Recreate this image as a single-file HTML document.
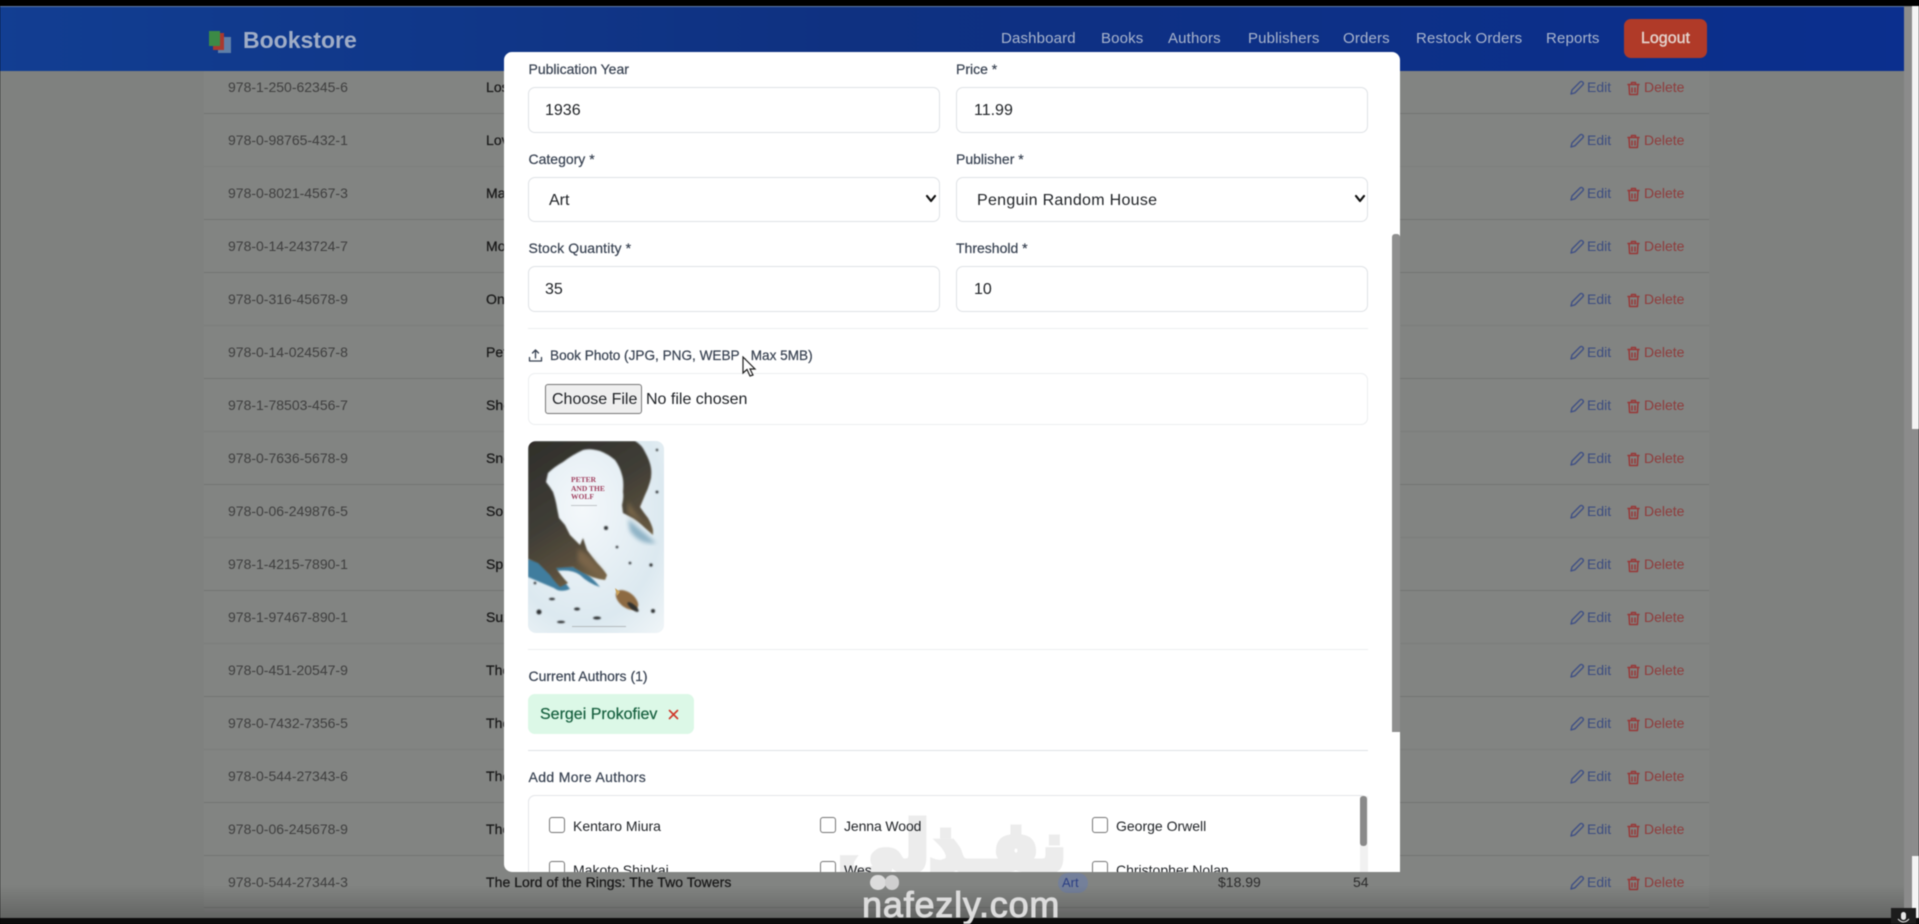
<!DOCTYPE html>
<html lang="en"><head><meta charset="utf-8"><title>Bookstore</title>
<style>
html,body{margin:0;padding:0;width:1919px;height:924px;overflow:hidden;background:#000}
#p{position:relative;width:1919px;height:924px;overflow:hidden;font-family:"Liberation Sans",sans-serif;filter:blur(.45px);background:#7f817f}
#p div,#p span,#p svg{position:absolute;white-space:nowrap}
.isbn{left:228px;font-size:14px;line-height:16px;color:#3f3f3f}
.t{left:486px;font-size:14px;line-height:16px;color:#181818;-webkit-text-stroke:.25px #181818;letter-spacing:.05px}
.ln{left:204px;width:1505px;height:1px;background:#737573}
.e{left:1587px;font-size:14px;line-height:16px;color:#3c4d80}
.d{left:1644px;font-size:14px;line-height:16px;color:#8f3c3c}
.nav{top:30px;font-size:15px;line-height:18px;color:#aab5cd;letter-spacing:.15px}
.lb{font-size:14px;line-height:16px;color:#374151;-webkit-text-stroke:.2px #374151}
.in{border:1.5px solid #dfe2e6;border-radius:7px;background:#fff;box-sizing:border-box}
.v{font-size:16px;line-height:18px;color:#1f2226}
.hr{height:1px;background:#eceef0}
.cb{width:16px;height:16px;border:1.5px solid #767676;border-radius:3px;box-sizing:border-box;background:#fff}
.n{font-size:14px;line-height:16px;color:#1f2226}
</style></head><body><div id="p">

<!-- table -->
<div style="left:204px;top:71px;width:1505px;height:840px;background:#828482"></div>
<div style="left:1904px;top:7px;width:8px;height:911px;background:#8b8b8b"></div>
<div style="left:1912px;top:5px;width:7px;height:424px;background:#f4f4f4"></div>
<div style="left:1912px;top:429px;width:7px;height:427px;background:#8c8c8c"></div>
<div style="left:1912px;top:856px;width:7px;height:62px;background:#f4f4f4"></div>

<div class="isbn" style="top:79px">978-1-250-62345-6</div><div class="t" style="top:79px">Lost Horizon</div><div class="ln" style="top:113px"></div>
<div class="isbn" style="top:132px">978-0-98765-432-1</div><div class="t" style="top:132px">Love Story</div><div class="ln" style="top:166px;opacity:.3"></div>
<div class="isbn" style="top:185px">978-0-8021-4567-3</div><div class="t" style="top:185px">Master</div><div class="ln" style="top:219px"></div>
<div class="isbn" style="top:238px">978-0-14-243724-7</div><div class="t" style="top:238px">Moby Dick</div><div class="ln" style="top:272px"></div>
<div class="isbn" style="top:291px">978-0-316-45678-9</div><div class="t" style="top:291px">One Day</div><div class="ln" style="top:325px;opacity:.4"></div>
<div class="isbn" style="top:344px">978-0-14-024567-8</div><div class="t" style="top:344px">Peter</div><div class="ln" style="top:378px"></div>
<div class="isbn" style="top:397px">978-1-78503-456-7</div><div class="t" style="top:397px">Shogun</div><div class="ln" style="top:431px;opacity:.4"></div>
<div class="isbn" style="top:450px">978-0-7636-5678-9</div><div class="t" style="top:450px">Snow</div><div class="ln" style="top:484px"></div>
<div class="isbn" style="top:503px">978-0-06-249876-5</div><div class="t" style="top:503px">Song</div><div class="ln" style="top:537px;opacity:.4"></div>
<div class="isbn" style="top:556px">978-1-4215-7890-1</div><div class="t" style="top:556px">Spirit</div><div class="ln" style="top:590px"></div>
<div class="isbn" style="top:609px">978-1-97467-890-1</div><div class="t" style="top:609px">Suzume</div><div class="ln" style="top:643px;opacity:.4"></div>
<div class="isbn" style="top:662px">978-0-451-20547-9</div><div class="t" style="top:662px">The</div><div class="ln" style="top:696px"></div>
<div class="isbn" style="top:715px">978-0-7432-7356-5</div><div class="t" style="top:715px">The</div><div class="ln" style="top:749px;opacity:.4"></div>
<div class="isbn" style="top:768px">978-0-544-27343-6</div><div class="t" style="top:768px">The</div><div class="ln" style="top:802px"></div>
<div class="isbn" style="top:821px">978-0-06-245678-9</div><div class="t" style="top:821px">The</div><div class="ln" style="top:855px"></div>
<div class="isbn" style="top:874px">978-0-544-27344-3</div><div class="t" style="top:874px">The Lord of the Rings: The Two Towers</div><div class="ln" style="top:907px"></div>

<div style="left:1058px;top:873px;width:30px;height:20px;border-radius:10px;background:#74809a"></div>
<div style="left:1062px;top:874px;font-size:13px;line-height:18px;color:#2b3f85">Art</div>
<div style="left:1218px;top:874px;font-size:14px;line-height:16px;color:#2c2c2c">$18.99</div>
<div style="left:1353px;top:874px;font-size:14px;line-height:16px;color:#2c2c2c">54</div>

<!-- action icons rows -->
<svg style="left:0;top:0" width="1919" height="924" fill="none" stroke-linecap="round" stroke-linejoin="round">
<defs>
<g id="pen"><path d="M2 14 L3 10 L11 2 Q12.500 .8 13.800 2.200 Q15 3.500 13.800 4.800 L6 12.800 Z" stroke="#3f5085" stroke-width="1.400"/></g>
<g id="tr"><path d="M1 3.500H12M4.500 3.500V1.500H8.500V3.500M2 3.500L2.600 13.500H10.400L11 3.500M5 7V11M8 7V11" stroke="#983838" stroke-width="1.500"/></g>
</defs>
<use href="#pen" x="1569" y="80"/><use href="#tr" x="1627" y="81"/>
<use href="#pen" x="1569" y="133"/><use href="#tr" x="1627" y="134"/>
<use href="#pen" x="1569" y="186"/><use href="#tr" x="1627" y="187"/>
<use href="#pen" x="1569" y="239"/><use href="#tr" x="1627" y="240"/>
<use href="#pen" x="1569" y="292"/><use href="#tr" x="1627" y="293"/>
<use href="#pen" x="1569" y="345"/><use href="#tr" x="1627" y="346"/>
<use href="#pen" x="1569" y="398"/><use href="#tr" x="1627" y="399"/>
<use href="#pen" x="1569" y="451"/><use href="#tr" x="1627" y="452"/>
<use href="#pen" x="1569" y="504"/><use href="#tr" x="1627" y="505"/>
<use href="#pen" x="1569" y="557"/><use href="#tr" x="1627" y="558"/>
<use href="#pen" x="1569" y="610"/><use href="#tr" x="1627" y="611"/>
<use href="#pen" x="1569" y="663"/><use href="#tr" x="1627" y="664"/>
<use href="#pen" x="1569" y="716"/><use href="#tr" x="1627" y="717"/>
<use href="#pen" x="1569" y="769"/><use href="#tr" x="1627" y="770"/>
<use href="#pen" x="1569" y="822"/><use href="#tr" x="1627" y="823"/>
<use href="#pen" x="1569" y="875"/><use href="#tr" x="1627" y="876"/>
</svg>
<div class="e" style="top:79px">Edit</div><div class="d" style="top:79px">Delete</div>
<div class="e" style="top:132px">Edit</div><div class="d" style="top:132px">Delete</div>
<div class="e" style="top:185px">Edit</div><div class="d" style="top:185px">Delete</div>
<div class="e" style="top:238px">Edit</div><div class="d" style="top:238px">Delete</div>
<div class="e" style="top:291px">Edit</div><div class="d" style="top:291px">Delete</div>
<div class="e" style="top:344px">Edit</div><div class="d" style="top:344px">Delete</div>
<div class="e" style="top:397px">Edit</div><div class="d" style="top:397px">Delete</div>
<div class="e" style="top:450px">Edit</div><div class="d" style="top:450px">Delete</div>
<div class="e" style="top:503px">Edit</div><div class="d" style="top:503px">Delete</div>
<div class="e" style="top:556px">Edit</div><div class="d" style="top:556px">Delete</div>
<div class="e" style="top:609px">Edit</div><div class="d" style="top:609px">Delete</div>
<div class="e" style="top:662px">Edit</div><div class="d" style="top:662px">Delete</div>
<div class="e" style="top:715px">Edit</div><div class="d" style="top:715px">Delete</div>
<div class="e" style="top:768px">Edit</div><div class="d" style="top:768px">Delete</div>
<div class="e" style="top:821px">Edit</div><div class="d" style="top:821px">Delete</div>
<div class="e" style="top:874px">Edit</div><div class="d" style="top:874px">Delete</div>

<!-- bottom shading -->
<div style="left:0;top:885px;width:1904px;height:33px;background:linear-gradient(180deg,rgba(0,0,0,0),rgba(0,0,0,.22))"></div>

<!-- header -->
<div style="left:0;top:7px;width:1904px;height:64px;background:linear-gradient(90deg,#123e92,#0f3181 45%,#0b2f8e)"></div>
<div style="left:0;top:0;width:1919px;height:6px;background:#000"></div>
<div style="left:0;top:6px;width:1904px;height:1px;background:#5f7ba8"></div>
<svg style="left:207px;top:29px" width="28" height="25" viewBox="0 0 28 25">
<rect x="11" y="8" width="13" height="16" fill="#5f7fa8"/><rect x="6" y="4" width="11" height="17" fill="#a8392f"/><rect x="2" y="2" width="11" height="15" fill="#3c8a46"/></svg>
<div style="left:243px;top:27px;font-size:23px;line-height:27px;font-weight:700;color:#a0adc6">Bookstore</div>
<div class="nav" style="left:1001px">Dashboard</div>
<div class="nav" style="left:1101px">Books</div>
<div class="nav" style="left:1168px">Authors</div>
<div class="nav" style="left:1248px">Publishers</div>
<div class="nav" style="left:1343px">Orders</div>
<div class="nav" style="left:1416px">Restock Orders</div>
<div class="nav" style="left:1546px">Reports</div>
<div style="left:1624px;top:19px;width:83px;height:39px;border-radius:7px;background:#b03a28"></div>
<div style="left:1641px;top:30px;font-size:16px;line-height:18px;color:#e4d3cc;-webkit-text-stroke:.4px #e4d3cc">Logout</div>

<!-- modal -->
<div style="left:504px;top:52px;width:896px;height:820px;background:#fff;border-radius:8px 8px 0 8px;overflow:hidden"></div>
<div style="left:1392px;top:234px;width:8px;height:498px;background:#8f8f8f;border-radius:3px 3px 0 0"></div>

<div class="lb" style="left:528.500px;top:61px">Publication Year</div>
<div class="lb" style="left:956px;top:61px">Price *</div>
<div class="in" style="left:528px;top:87px;width:412px;height:46px"></div>
<div class="in" style="left:956px;top:87px;width:412px;height:46px"></div>
<div class="v" style="left:545px;top:102px">1936</div>
<div class="v" style="left:974px;top:102px">11.99</div>

<div class="lb" style="left:528.500px;top:151px">Category *</div>
<div class="lb" style="left:956px;top:151px">Publisher *</div>
<div class="in" style="left:528px;top:177px;width:412px;height:45px"></div>
<div class="in" style="left:956px;top:177px;width:412px;height:45px"></div>
<div class="v" style="left:549px;top:192px">Art</div>
<div class="v" style="left:977px;top:192px;letter-spacing:.3px">Penguin Random House</div>
<svg style="left:925px;top:194px" width="12" height="10" fill="none" stroke="#111" stroke-width="2.200" stroke-linecap="round" stroke-linejoin="round"><path d="M2 2 L6 7 L10 2"/></svg>
<svg style="left:1354px;top:194px" width="12" height="10" fill="none" stroke="#111" stroke-width="2.200" stroke-linecap="round" stroke-linejoin="round"><path d="M2 2 L6 7 L10 2"/></svg>

<div class="lb" style="left:528.500px;top:240px;letter-spacing:.15px">Stock Quantity *</div>
<div class="lb" style="left:956px;top:240px">Threshold *</div>
<div class="in" style="left:528px;top:266px;width:412px;height:46px"></div>
<div class="in" style="left:956px;top:266px;width:412px;height:46px"></div>
<div class="v" style="left:545px;top:281px">35</div>
<div class="v" style="left:974px;top:281px">10</div>

<div class="hr" style="left:528px;top:328px;width:840px"></div>
<svg style="left:528px;top:348px" width="15" height="15" fill="none" stroke="#374151" stroke-width="1.300" stroke-linecap="round" stroke-linejoin="round"><path d="M1.500 9.500V13H13.500V9.500M7.500 10V2M4.500 5L7.500 2L10.500 5"/></svg>
<div class="lb" style="left:550px;top:347.500px;font-size:13.600px">Book Photo (JPG, PNG, WEBP , Max 5MB)</div>
<div class="in" style="left:528px;top:373px;width:840px;height:52px;border-color:#eceef0"></div>
<div style="left:545px;top:384px;width:97px;height:30px;box-sizing:border-box;border:1.5px solid #767676;border-radius:3px;background:#efefef"></div>
<div class="v" style="left:552px;top:391px;font-size:16px">Choose File</div>
<div class="v" style="left:646px;top:391px;font-size:16px">No file chosen</div>
<svg style="left:742px;top:356px" width="16" height="22" viewBox="0 0 16 22"><path d="M1 1V17L5 13.500L8 20L11 19L8 13H13Z" fill="#fff" stroke="#222" stroke-width="1.200"/></svg>

<!-- book cover -->
<svg style="left:528px;top:441px" width="136" height="192" viewBox="0 0 136 192">
<defs>
<clipPath id="c"><rect width="136" height="192" rx="8"/></clipPath>
<linearGradient id="w" x1="0" y1="0" x2=".55" y2="1"><stop offset="0" stop-color="#2f2e2a"/><stop offset=".5" stop-color="#3f3d36"/><stop offset=".8" stop-color="#5a4f3c"/><stop offset="1" stop-color="#7d6a4a"/></linearGradient>
<radialGradient id="s" cx=".4" cy=".35" r=".85"><stop offset="0" stop-color="#f4f8fb"/><stop offset=".7" stop-color="#dce9f0"/><stop offset="1" stop-color="#eef4f7"/></radialGradient>
<filter id="b"><feGaussianBlur stdDeviation=".8"/></filter>
<filter id="b2"><feGaussianBlur stdDeviation="2.200"/></filter>
</defs>
<g clip-path="url(#c)"><rect width="136" height="192" fill="url(#s)"/>
<path d="M0 118 Q0 128 0 136 Q14 142 26 147 Q32 152 42 148 Q36 140 28 130 Q44 128 52 134 Q60 142 72 146 Q64 136 50 126Z" fill="#3f7d9e" filter="url(#b)"/>
<path d="M100 78 Q112 88 128 102 Q112 104 102 90Z" fill="#8fb3c6" filter="url(#b2)"/>
<path d="M0 0 H107 Q114 4 117 11 Q122 20 123 27 Q124 35 122 41 Q120 48 117 54 L112 66 Q116 72 120 77 Q124 84 125 89 L125 94 L117 87 Q110 80 105 77 L95 72 L94 64 Q96 56 95 51 Q96 40 94 34 Q92 26 87 19 Q80 13 72 10 Q62 7 55 9 Q44 14 35 21 Q26 26 20 32 L18 41 Q22 46 25 51 Q28 60 29 67 L31 77 L37 84 Q40 90 42 94 L52 104 L55 97 L59 109 Q64 116 69 122 Q75 128 79 134 L77 139 Q70 138 64 136 Q54 132 45 126 Q38 126 28 127 Q34 136 40 142 L32 146 Q26 140 22 134 Q16 128 10 122 L0 118 Z" fill="url(#w)" filter="url(#b)"/>
<path d="M50 108 Q60 112 70 126 Q76 132 76 136 Q62 132 50 120Z" fill="#7a6548" filter="url(#b2)"/>
<path d="M100 60 Q106 72 118 84 Q108 78 100 72Z" fill="#7a674a" filter="url(#b2)"/>
<ellipse cx="99" cy="159" rx="13" ry="7.500" transform="rotate(38 99 159)" fill="#8d6a42" filter="url(#b)"/>
<ellipse cx="105" cy="166" rx="7" ry="2.500" transform="rotate(40 105 166)" fill="#33322e" filter="url(#b)"/>
<path d="M87 147 L92 151 L89 155Z" fill="#c9a25b"/>
<g fill="#2f3234" filter="url(#b)"><circle cx="78" cy="87" r="2"/><ellipse cx="11" cy="171" rx="2.500" ry="2.500"/><ellipse cx="24" cy="158" rx="3" ry="1.300"/><ellipse cx="49" cy="168" rx="3" ry="1.500"/><ellipse cx="69" cy="177" rx="4" ry="1.500"/><ellipse cx="33" cy="181" rx="4" ry="1.200"/><circle cx="125" cy="170" r="2"/><circle cx="123" cy="124" r="1.600"/><circle cx="102" cy="122" r="1.300"/><circle cx="89" cy="106" r="1.300"/><circle cx="129" cy="51" r="1.400"/><circle cx="129" cy="9" r="1.200"/><circle cx="7" cy="142" r="1.300"/></g>
<text x="43" y="41" font-family="Liberation Serif,serif" font-size="7.500" fill="#a0405f" font-weight="700">PETER</text>
<text x="43" y="50" font-family="Liberation Serif,serif" font-size="7.500" fill="#a0405f" font-weight="700">AND THE</text>
<text x="43" y="58" font-family="Liberation Serif,serif" font-size="7.500" fill="#a0405f" font-weight="700">WOLF</text>
<rect x="43" y="64" width="26" height="1" fill="#c0c5c8"/>
<rect x="44" y="185" width="54" height="1" fill="#b4babd"/>
</g></svg>

<div class="hr" style="left:528px;top:649px;width:840px"></div>
<div class="lb" style="left:528.500px;top:668px">Current Authors (1)</div>
<div style="left:528px;top:694px;width:166px;height:40px;border-radius:7px;background:#dcf8e7"></div>
<div style="left:540px;top:706px;font-size:16px;line-height:18px;color:#17603f;-webkit-text-stroke:.2px #17603f">Sergei Prokofiev</div>
<svg style="left:667px;top:708px" width="13" height="13" fill="none" stroke="#d0392c" stroke-width="1.700" stroke-linecap="round"><path d="M2.500 2.500L10.500 10.500M10.500 2.500L2.500 10.500"/></svg>
<div class="hr" style="left:528px;top:750px;width:840px;background:#dfe2e6"></div>
<div class="lb" style="left:528.500px;top:769px;letter-spacing:.35px">Add More Authors</div>

<div style="left:528px;top:795px;width:840px;height:77px;overflow:hidden">
<div class="in" style="left:0;top:0;width:840px;height:100px;border-color:#e3e5e8"></div>
<div class="cb" style="left:21px;top:22px"></div><div class="n" style="left:45px;top:23px">Kentaro Miura</div>
<div class="cb" style="left:292px;top:22px"></div><div class="n" style="left:316px;top:23px;letter-spacing:-.1px">Jenna Wood</div>
<div class="cb" style="left:564px;top:22px"></div><div class="n" style="left:588px;top:23px">George Orwell</div>
<div class="cb" style="left:21px;top:66px"></div><div class="n" style="left:45px;top:67px">Makoto Shinkai</div>
<div class="cb" style="left:292px;top:66px"></div><div class="n" style="left:316px;top:67px">Wes</div>
<div class="cb" style="left:564px;top:66px"></div><div class="n" style="left:588px;top:67px">Christopher Nolan</div>
<div style="left:832px;top:1px;width:8px;height:76px;background:#f1f1f1"></div>
<div style="left:832px;top:1px;width:7px;height:50px;background:#8a8a8a;border-radius:3px"></div>
</div>

<!-- bottom bar -->
<div style="left:0;top:918px;width:1919px;height:6px;background:#0c0c0c"></div>
<div style="left:1891px;top:908px;width:25px;height:16px;background:#1c1c1c"></div>
<svg style="left:1891px;top:908px" width="25" height="16" fill="none"><rect x="10" y="4" width="5" height="8" rx="2.500" fill="#e6e6e6"/><path d="M7 11Q12.500 17 18 11" stroke="#e6e6e6"/></svg>

<!-- watermark -->
<div style="left:840px;top:800px;width:240px;height:72px;overflow:hidden;mix-blend-mode:multiply">
<div dir="rtl" lang="ar" style="right:14px;top:-2px;font-family:'DejaVu Sans',sans-serif;font-weight:700;font-size:68px;line-height:100px;color:#ececec;-webkit-text-stroke:6px #ececec">نفـذلي</div>
</div>
<div style="left:870px;top:875px;width:16px;height:15px;border-radius:8px;background:#dcdcdc"></div>
<div style="left:885px;top:875px;width:14px;height:15px;border-radius:8px;background:#cfcfcf"></div>
<div style="left:862px;top:884px;font-size:36px;line-height:42px;color:#dcdcdc;letter-spacing:.8px;-webkit-text-stroke:1px #dcdcdc">nafezly.com</div>
</div></body></html>
